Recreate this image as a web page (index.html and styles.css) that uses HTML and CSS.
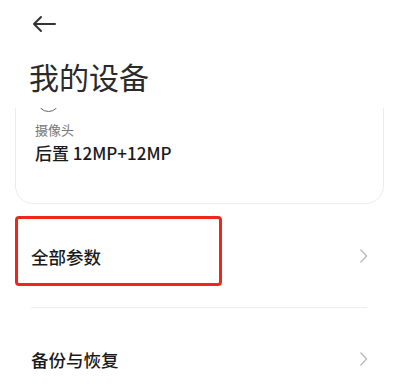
FILE: index.html
```html
<!DOCTYPE html>
<html lang="zh-CN">
<head>
    <meta charset="UTF-8">
    <meta name="viewport" content="width=device-width, initial-scale=1.0">
    <title>我的设备</title>
    <link rel="stylesheet" href="styles.css">
</head>
<body>
    <div class="header">
        <svg class="back" width="26" height="24" viewBox="0 0 26 24">
            <path d="M24 12 H3 M10 5 L3 12 L10 19" fill="none" stroke="#333" stroke-width="2" stroke-linecap="round" stroke-linejoin="round"/>
        </svg>
        <h1 class="title">我的设备</h1>
    </div>

    <div class="content">
        <div class="card">
            <div class="card-icon"></div>
            <p class="card-label">摄像头</p>
            <p class="card-value">后置 12MP+12MP</p>
        </div>

        <div class="list">
            <div class="row">
                <span>全部参数</span>
                <svg class="chevron" width="9" height="16" viewBox="0 0 9 16">
                    <path d="M1.5 1.5 L7.5 8 L1.5 14.5" fill="none" stroke="#bdbdbd" stroke-width="1.4"/>
                </svg>
                <!-- 标注框 -->
                <div class="mark"></div>
            </div>
            <div class="divider"></div>
            <div class="row">
                <span>备份与恢复</span>
                <svg class="chevron" width="9" height="16" viewBox="0 0 9 16">
                    <path d="M1.5 1.5 L7.5 8 L1.5 14.5" fill="none" stroke="#bdbdbd" stroke-width="1.4"/>
                </svg>
            </div>
        </div>
    </div>
</body>
</html>
```

FILE: styles.css
```css
* {
    box-sizing: border-box;
}
body {
    margin: 0;
    background-color: #fff;
    font-family: "Noto Sans CJK SC", "Noto Sans", sans-serif;
    color: #1a1a1a;
}

/* 顶部 */
.header {
    height: 108px;
    padding-top: 12px;
}
.back {
    display: block;
    margin-left: 31px;
}
.title {
    margin: 20px 0 0 29px;
    font-size: 30px;
    line-height: 40px;
    font-weight: 400;
    color: #2a2a2a;
}

/* 滚动区域 */
.content {
    height: 284px;
    overflow: hidden;
}
.card {
    margin: -36px 14px 0 15px;
    padding: 16px 19px 38px;
    border: 1px solid #ececec;
    border-radius: 18px;
}
.card-icon {
    width: 23px;
    height: 23px;
    margin-left: 2px;
    margin-bottom: 1px;
    border: 1.5px solid #666;
    border-radius: 50%;
}
.card-label {
    margin: 9px 0 0;
    font-size: 13px;
    line-height: 18px;
    color: #777;
}
.card-value {
    margin: 2px 0 0;
    font-size: 17px;
    line-height: 24px;
    font-weight: 500;
    color: #1a1a1a;
}

/* 列表 */
.list {
    padding: 0 31px;
    margin-top: 17px;
}
.row {
    position: relative;
    height: 70px;
    display: flex;
    align-items: center;
    justify-content: space-between;
    font-size: 17.5px;
    font-weight: 500;
    color: #1a1a1a;
}
.chevron {
    display: block;
    margin-right: -1px;
}
.divider {
    height: 1px;
    margin: 16px 0;
    background-color: #ececec;
}
.mark {
    position: absolute;
    left: -16px;
    top: -5px;
    width: 207px;
    height: 70px;
    border: 3px solid #f0261c;
    border-radius: 4px;
}
```
